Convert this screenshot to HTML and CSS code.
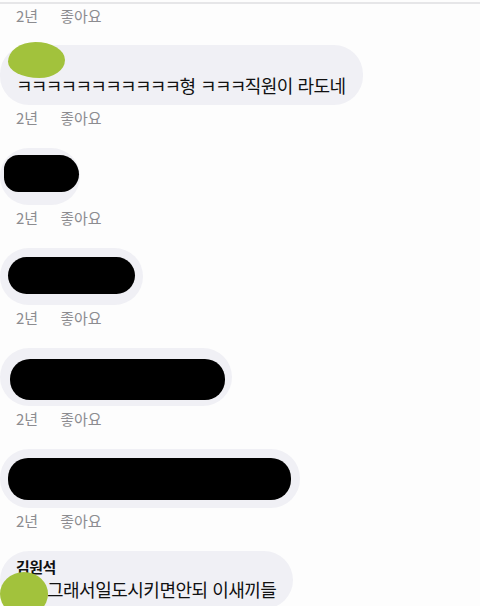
FILE: index.html
```html
<!DOCTYPE html>
<html lang="ko">
  <head>
    <meta charset="UTF-8" />
    <meta name="viewport" content="width=device-width, initial-scale=1.0" />
    <title>댓글</title>
    <link rel="stylesheet" href="styles.css">
  </head>
  <body>
    <div class="thread">
      <div class="meta"><span>2년</span><span>좋아요</span></div>

      <div class="comment">
        <div class="bubble first">
          <div class="name">&nbsp;</div>
          <div class="text"><span class="kk">ㅋㅋㅋㅋㅋㅋㅋㅋㅋㅋㅋ</span>형 <span class="kk">ㅋㅋㅋ</span>직원이 라도네</div>
          <span class="blob green one"></span>
        </div>
        <div class="meta"><span>2년</span><span>좋아요</span></div>
      </div>

      <div class="comment">
        <div class="bubble hidden b2"><span class="redact"></span></div>
        <div class="meta"><span>2년</span><span>좋아요</span></div>
      </div>

      <div class="comment">
        <div class="bubble hidden b3"><span class="redact"></span></div>
        <div class="meta"><span>2년</span><span>좋아요</span></div>
      </div>

      <div class="comment">
        <div class="bubble hidden b4"><span class="redact"></span></div>
        <div class="meta"><span>2년</span><span>좋아요</span></div>
      </div>

      <div class="comment">
        <div class="bubble hidden b5"><span class="redact"></span></div>
        <div class="meta"><span>2년</span><span>좋아요</span></div>
      </div>

      <div class="comment">
        <div class="bubble last">
          <div class="name">김원석</div>
          <div class="text indent">그래서일도시키면안되 이새끼들</div>
          <span class="blob green two"></span>
        </div>
      </div>
    </div>
  </body>
</html>
```

FILE: styles.css
```css
* {
  margin: 0;
  padding: 0;
  box-sizing: border-box;
}
body {
  background: #fdfdfd;
  font-family: "Noto Sans CJK KR", "Noto Sans", sans-serif;
  color: #111;
  overflow: hidden;
}
.thread {
  margin-top: 2px;
  border-top: 2px solid #e6e6e8;
}
.meta {
  display: flex;
  gap: 22px;
  padding-left: 16px;
  height: 26px;
  line-height: 26px;
  font-size: 15px;
  color: #8c8c90;
}
.thread > .meta {
  height: 24px;
  line-height: 24px;
}
.comment {
  display: flex;
  flex-direction: column;
  align-items: flex-start;
  margin-top: 17px;
}
.bubble {
  position: relative;
  background: #f0f0f5;
  border-radius: 29px;
  padding: 7px 17px 7px 16px;
}
.bubble.first {
  padding-top: 9px;
  padding-bottom: 7px;
}
.name {
  font-size: 15px;
  font-weight: 700;
  line-height: 18px;
  letter-spacing: -0.5px;
}
.text {
  font-size: 18px;
  line-height: 26px;
  letter-spacing: -0.5px;
  white-space: nowrap;
}
.kk {
  letter-spacing: -1.7px;
}
.indent {
  padding-left: 31px;
}
.blob {
  position: absolute;
  display: block;
}
.green {
  background: #a2c23c;
}
.one {
  top: -3px;
  left: 8px;
  width: 57px;
  height: 36px;
  border-radius: 48% 52% 45% 55% / 55% 50% 50% 45%;
}
.two {
  top: 21px;
  left: 0;
  width: 48px;
  height: 44px;
  border-radius: 50%;
}
.redact {
  display: block;
  background: #000;
  border-radius: 20px;
}
.b2 {
  padding: 7px 1px 13px 4px;
}
.b2 .redact {
  width: 75px;
  height: 37px;
  border-radius: 18px 24px 22px 18px;
}
.b3 {
  padding: 9px 8px 11px;
}
.b3 .redact {
  width: 127px;
  height: 37px;
}
.b4 {
  padding: 11px 7px 6px 10px;
}
.b4 .redact {
  width: 215px;
  height: 41px;
}
.b5 {
  padding: 9px 9px 8px 8px;
}
.b5 .redact {
  width: 283px;
  height: 42px;
}
```
